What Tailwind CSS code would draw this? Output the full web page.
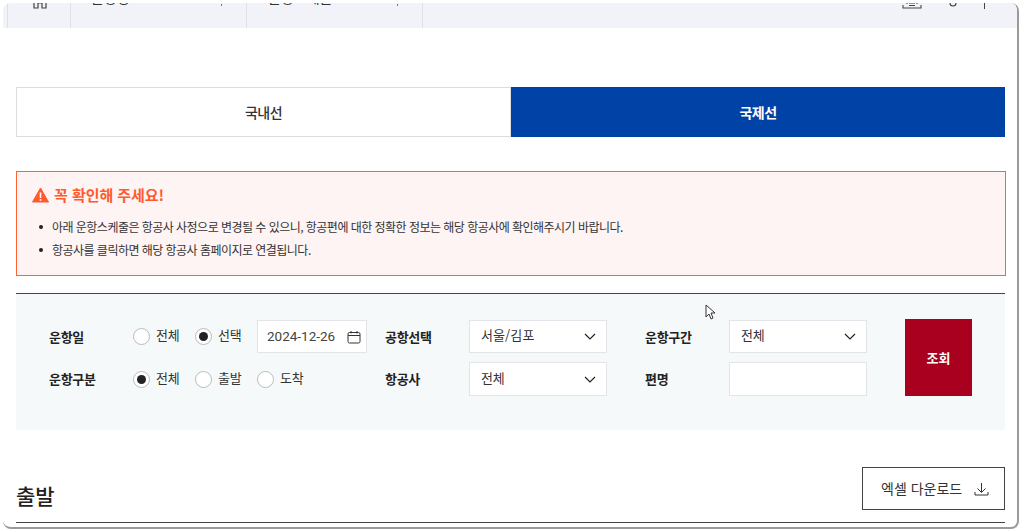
<!DOCTYPE html>
<html lang="ko">

<head>
    <meta charset="utf-8">
    <title>운항스케줄</title>
    <script src="https://cdn.jsdelivr.net/npm/@tailwindcss/browser@4"></script>
</head>

<body class="relative w-[1024px] h-[532px] overflow-hidden bg-white text-[#222] font-['Noto_Sans_CJK_KR','Noto_Sans',sans-serif]">
    <div class="ml-[3px] mt-[3px] w-[1016px] h-[526px] overflow-hidden bg-white rounded-[8px] border-r-2 border-b-2 border-[#9a9a9a]">
        <!-- top nav, scrolled mostly out of view -->
        <header class="flex h-[25px] overflow-hidden bg-[#f1f3f8] text-[14px] text-[#333]">
            <div class="flex justify-center w-[63px] ml-[4px] border-l border-[#dfe1e8]">
                <svg class="-mt-[11px] ml-[2px]" width="18" height="17" viewBox="0 0 18 17" fill="none" stroke="#444" stroke-width="1.2">
                    <path d="M1 8 9 1l8 7M3 7v9h4v-5h4v5h4V7" />
                </svg>
            </div>
            <div class="flex justify-between w-[176px] pl-[20px] pr-[24px] border-l border-[#dfe1e8]">
                <span class="-mt-[16px] leading-[20px]">운항정보</span>
                <i class="w-px h-[2px] mt-[1px] bg-[#777]"></i>
            </div>
            <div class="flex justify-between w-[176px] pl-[21px] pr-[24px] border-l border-[#dfe1e8]">
                <span class="-mt-[16px] leading-[20px]">운항스케줄</span>
                <i class="w-px h-[2px] mt-[1px] bg-[#777]"></i>
            </div>
            <div class="flex-1 flex justify-end border-l border-[#dfe1e8] pr-[32px]">
                <svg class="-mt-[10px]" width="20" height="17" viewBox="0 0 20 17" fill="none" stroke="#444" stroke-width="1.1">
                    <path d="M1 12v3h18v-3M5 8v3M15 8v3M7 10h6M7 12.500h6" />
                </svg>
                <svg class="-mt-[8px] ml-[20px]" width="16" height="13" viewBox="0 0 16 13" fill="none" stroke="#444" stroke-width="1.1">
                    <path d="M1 3c3 0 6 1 8 3" />
                    <circle cx="11" cy="8" r="3" />
                </svg>
                <div class="w-px h-[6px] ml-[26px] bg-[#444]"></div>
            </div>
        </header>

        <main class="w-[989px] ml-[13px] mt-[59px]">
            <div class="flex h-[50px] text-[14px] tracking-[-0.6px]">
                <a class="flex items-center justify-center w-[495px] bg-white border border-[#ddd] font-medium text-[#333]">국내선</a>
                <a class="flex items-center justify-center flex-1 bg-[#0042a5] font-bold text-white">국제선</a>
            </div>

            <section class="h-[105px] w-[990px] mt-[34px] pl-[15px] pt-[12px] bg-[#fdf4f3] border border-[#ff6335]">
                <h2 class="flex items-center gap-[5px] h-[22px] text-[15px] font-bold text-[#ff5a2d] tracking-[-0.05px]">
                    <svg width="17" height="16" viewBox="0 0 17 16">
                        <path d="M8.500 1 16.500 15H.5Z" fill="#ff5a2d" stroke="#ff5a2d" stroke-width="1" stroke-linejoin="round" />
                        <path d="M7.700 5.500h1.600v5.500H7.700ZM7.700 12h1.600v1.700H7.700Z" fill="#fff" />
                    </svg>
                    꼭 확인해 주세요!
                </h2>
                <ul class="mt-[9px] text-[12px] leading-[23px] tracking-[-0.53px] text-[#333]">
                    <li class="flex items-center gap-[9px] pl-[7px]">
                        <span class="w-[4px] h-[4px] rounded-full bg-[#222]"></span>
                        아래 운항스케줄은 항공사 사정으로 변경될 수 있으니, 항공편에 대한 정확한 정보는 해당 항공사에 확인해주시기 바랍니다.
                    </li>
                    <li class="flex items-center gap-[9px] pl-[7px]">
                        <span class="w-[4px] h-[4px] rounded-full bg-[#222]"></span>
                        항공사를 클릭하면 해당 항공사 홈페이지로 연결됩니다.
                    </li>
                </ul>
            </section>

            <form class="flex h-[137px] mt-[17px] pl-[33px] pt-[26px] bg-[#f6f9fa] border-t border-[#444]">
                <div class="grid grid-cols-[84px_252px_84px_176px_84px_138px] grid-rows-[33px_34px] gap-y-[9px] items-center text-[13px] tracking-[-0.3px] text-[#333]">
                    <label class="font-bold text-[#222]">운항일</label>
                    <div class="flex items-center">
                        <span class="flex items-center gap-[6px] w-[62px]">
                            <i class="w-[17px] h-[17px] rounded-full bg-white border border-[#bbb]"></i><span class="-mt-[3px]">전체</span>
                        </span>
                        <span class="flex items-center gap-[6px] w-[62px]">
                            <i class="flex items-center justify-center w-[17px] h-[17px] rounded-full bg-white border border-[#bbb]"><b class="w-[9px] h-[9px] rounded-full bg-[#222]"></b></i><span class="-mt-[3px]">선택</span>
                        </span>
                        <div class="flex items-center justify-between w-[110px] h-[33px] pl-[9px] pr-[5px] bg-white border border-[#e2e4ea] font-['Roboto',sans-serif] text-[13.500px] tracking-normal text-[#444]">
                            2024-12-26
                            <svg width="14" height="14" viewBox="0 0 14 14" fill="none" stroke="#333" stroke-width="1">
                                <rect x="1" y="2.500" width="12" height="10.500" rx="1.500" />
                                <path d="M1 5.500h12M4 1v2.500M10 1v2.500" />
                            </svg>
                        </div>
                    </div>
                    <label class="font-bold text-[#222]">공항선택</label>
                    <div class="flex items-center justify-between w-[138px] h-[33px] pl-[11px] pr-[10px] bg-white border border-[#e2e4ea]">
                        <span class="-mt-[3px] tracking-[0.1px]">서울/김포</span>
                        <svg width="12" height="7" viewBox="0 0 12 7" fill="none" stroke="#222" stroke-width="1.200">
                            <path d="M1 1l5 5 5-5" />
                        </svg>
                    </div>
                    <label class="font-bold text-[#222]">운항구간</label>
                    <div class="flex items-center justify-between w-[138px] h-[33px] pl-[11px] pr-[10px] bg-white border border-[#e2e4ea]">
                        <span class="-mt-[3px]">전체</span>
                        <svg width="12" height="7" viewBox="0 0 12 7" fill="none" stroke="#222" stroke-width="1.200">
                            <path d="M1 1l5 5 5-5" />
                        </svg>
                    </div>

                    <label class="font-bold text-[#222]">운항구분</label>
                    <div class="flex items-center">
                        <span class="flex items-center gap-[6px] w-[62px]">
                            <i class="flex items-center justify-center w-[17px] h-[17px] rounded-full bg-white border border-[#bbb]"><b class="w-[9px] h-[9px] rounded-full bg-[#222]"></b></i><span class="-mt-[3px]">전체</span>
                        </span>
                        <span class="flex items-center gap-[6px] w-[62px]">
                            <i class="w-[17px] h-[17px] rounded-full bg-white border border-[#bbb]"></i><span class="-mt-[3px]">출발</span>
                        </span>
                        <span class="flex items-center gap-[6px] w-[62px]">
                            <i class="w-[17px] h-[17px] rounded-full bg-white border border-[#bbb]"></i><span class="-mt-[3px]">도착</span>
                        </span>
                    </div>
                    <label class="font-bold text-[#222]">항공사</label>
                    <div class="flex items-center justify-between w-[138px] h-[34px] pl-[11px] pr-[10px] bg-white border border-[#e2e4ea]">
                        <span class="-mt-[3px]">전체</span>
                        <svg width="12" height="7" viewBox="0 0 12 7" fill="none" stroke="#222" stroke-width="1.200">
                            <path d="M1 1l5 5 5-5" />
                        </svg>
                    </div>
                    <label class="font-bold text-[#222]">편명</label>
                    <div class="w-[138px] h-[34px] bg-white border border-[#e2e4ea]"></div>
                </div>
                <button type="button" class="w-[67px] h-[77px] ml-[38px] -mt-px bg-[#a8001e] text-[13px] font-bold text-white">조회</button>
            </form>

            <div class="flex items-end justify-between h-[93px] w-[989px] pb-[12px] border-b border-[#444]">
                <h3 class="text-[21px] font-medium leading-[30px] text-[#222]">출발</h3>
                <a class="flex items-center justify-between w-[143px] h-[43px] pl-[18px] pr-[15px] bg-white border border-[#444] text-[14px] text-[#333]">
                    엑셀 다운로드
                    <svg width="15" height="14" viewBox="0 0 15 14" fill="none" stroke="#333" stroke-width="1">
                        <path d="M7.500 1v9M3.500 6.500l4 4 4-4M1 10v3h13v-3" />
                    </svg>
                </a>
            </div>
        </main>
    </div>

    <!-- mouse cursor -->
    <svg class="absolute left-[705px] top-[304px]" width="12" height="17" viewBox="0 0 12 17" fill="#fff" stroke="#333" stroke-width="1">
        <path d="M1 1v12l3-3 2 5 2-1-2-5h4Z" />
    </svg>
</body>

</html>
